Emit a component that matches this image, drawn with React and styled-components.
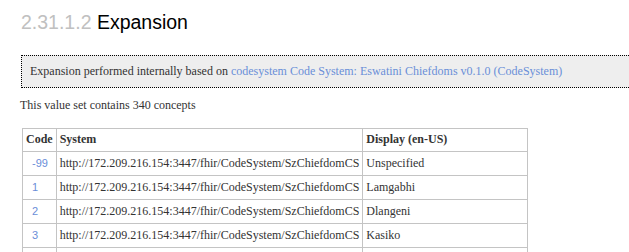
import React from "react";
import styled, { createGlobalStyle } from "styled-components";

const GlobalStyle = createGlobalStyle`
  body {
    margin: 0;
    background: #fff;
    font-family: "Liberation Serif", "Times New Roman", serif;
    font-size: 12px;
    line-height: 14px;
    color: #333;
  }
`;

const Styled = {
  Page: styled.div`
    padding: 11px 0 0 20px;
    overflow: hidden;
    width: 629px;
    box-sizing: border-box;
  `,
  Heading: styled.h2`
    margin: 0 0 22px 1px;
    font-family: "Liberation Sans", Arial, sans-serif;
    font-weight: normal;
    font-size: 19.5px;
    line-height: 22px;
    color: #000;
  `,
  Number: styled.span`
    color: #c0c0c0;
  `,
  Note: styled.div`
    margin: 0 -40px 10px 1px;
    padding: 8px 8px 9px;
    background: #eee;
    border: 1px dotted #000;
    color: #333;
  `,
  Link: styled.a`
    color: #6a8ed8;
    text-decoration: none;
  `,
  Para: styled.p`
    margin: 0 0 16px;
  `,
  Table: styled.table`
    margin-left: 2px;
    border-collapse: collapse;
  `,
  Th: styled.th`
    border: 1px solid #c4c4c4;
    padding: 3px 3px 5px;
    text-align: left;
    font-weight: bold;
    width: ${(p) => (p.$width ? `${p.$width}px` : "auto")};
  `,
  Td: styled.td`
    border: 1px solid #c4c4c4;
    padding: 4px 3px 5px;
    white-space: nowrap;
  `,
  CodeTd: styled.td`
    border: 1px solid #c4c4c4;
    padding: 4px 3px 5px 9px;
    white-space: nowrap;
    font-family: "Liberation Sans", Arial, sans-serif;
    font-size: 11px;
  `,
};

const SYSTEM = "http://172.209.216.154:3447/fhir/CodeSystem/SzChiefdomCS";

const rows = [
  { code: "-99", display: "Unspecified" },
  { code: "1", display: "Lamgabhi" },
  { code: "2", display: "Dlangeni" },
  { code: "3", display: "Kasiko" },
  { code: "4", display: "Kwaluseni" },
];

const App = () => (
  <>
    <GlobalStyle />
    <Styled.Page>
      <Styled.Heading>
        <Styled.Number>2.31.1.2</Styled.Number> Expansion
      </Styled.Heading>
      <Styled.Note>
        Expansion performed internally based on{" "}
        <Styled.Link href="#">
          codesystem Code System: Eswatini Chiefdoms v0.1.0 (CodeSystem)
        </Styled.Link>
      </Styled.Note>
      <Styled.Para>This value set contains 340 concepts</Styled.Para>
      <Styled.Table>
        <thead>
          <tr>
            <Styled.Th>Code</Styled.Th>
            <Styled.Th>System</Styled.Th>
            <Styled.Th $width={158}>Display (en-US)</Styled.Th>
          </tr>
        </thead>
        <tbody>
          {rows.map((r) => (
            <tr key={r.code}>
              <Styled.CodeTd>
                <Styled.Link href="#">{r.code}</Styled.Link>
              </Styled.CodeTd>
              <Styled.Td>{SYSTEM}</Styled.Td>
              <Styled.Td>{r.display}</Styled.Td>
            </tr>
          ))}
        </tbody>
      </Styled.Table>
    </Styled.Page>
  </>
);

export default App;
